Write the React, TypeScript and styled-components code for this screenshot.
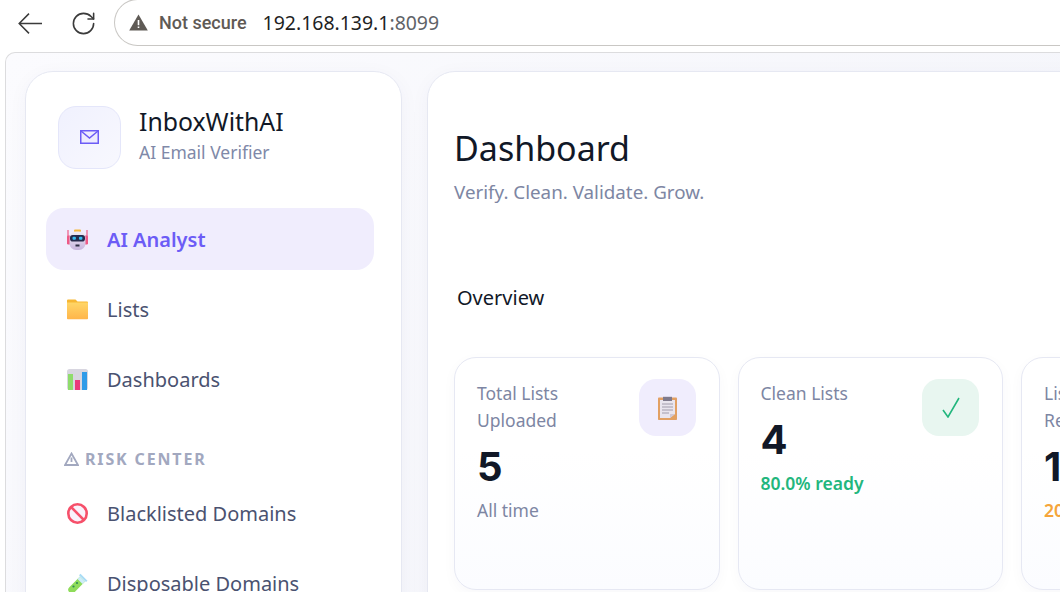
import React from 'react';
import styled, { createGlobalStyle } from 'styled-components';
import { RotateCw } from 'lucide-react';

const GlobalStyle = createGlobalStyle`
  html, body {
    margin: 0;
    padding: 0;
    width: 1060px;
    height: 592px;
    overflow: hidden;
    background: #ffffff;
    font-family: "Noto Sans", "Open Sans", sans-serif;
  }
  * { box-sizing: border-box; }
`;

const Screen = styled.div`
  width: 1060px;
  height: 592px;
  display: flex;
  flex-direction: column;
  overflow: hidden;
`;

const Toolbar = styled.div`
  height: 52px;
  flex: none;
  display: flex;
  align-items: flex-start;
  padding-left: 18px;
  background: #ffffff;
`;

const ToolButton = styled.div<{ $width: number }>`
  width: ${p => p.$width}px;
  height: 46px;
  flex: none;
  display: flex;
  align-items: center;
  color: #3b3b3b;
`;

const AddressBar = styled.div`
  flex: none;
  width: 960px;
  height: 47px;
  margin-top: -1px;
  display: flex;
  align-items: center;
  padding-left: 14px;
  border: 1px solid #c9c7c4;
  border-right: none;
  border-radius: 24px 0 0 24px;
`;

const NotSecure = styled.span`
  margin-left: 11px;
  font-family: "Roboto", sans-serif;
  font-size: 18px;
  font-weight: 500;
  color: #5f5a55;
`;

const Url = styled.span`
  margin-left: 16px;
  font-family: "Noto Sans", sans-serif;
  font-size: 19.45px;
  color: #1f1f1f;
`;

const UrlPort = styled.span`
  color: #5f6368;
`;

const Viewport = styled.div`
  flex: 1;
  min-height: 0;
  margin-left: 5px;
  padding: 18px 0 0 19px;
  display: flex;
  gap: 25px;
  overflow: hidden;
  background: linear-gradient(135deg, #fbfbfe 0%, #f3f4fa 100%);
  border: 1px solid #dcdcde;
  border-right: none;
  border-bottom: none;
  border-radius: 10px 0 0 0;
`;

const Sidebar = styled.aside`
  flex: none;
  width: 377px;
  height: 640px;
  padding: 33px 27px 0 20px;
  background: #ffffff;
  border: 1px solid #e6e8f2;
  border-radius: 28px;
  box-shadow: 0 4px 20px rgba(30, 40, 90, 0.04);
`;

const Brand = styled.div`
  display: flex;
  align-items: center;
  gap: 18px;
  padding-left: 12px;
`;

const BrandMark = styled.div`
  width: 63px;
  height: 63px;
  flex: none;
  display: flex;
  align-items: center;
  justify-content: center;
  background: linear-gradient(135deg, #f0f1fe 0%, #f8f8fe 100%);
  border: 1px solid #e4e6fa;
  border-radius: 18px;
`;

const BrandText = styled.div`
  display: flex;
  flex-direction: column;
  padding-bottom: 2px;
`;

const BrandName = styled.div`
  font-size: 24.8px;
  line-height: 32px;
  color: #111827;
`;

const BrandTag = styled.div`
  font-size: 17.5px;
  line-height: 30px;
  color: #8089a8;
`;

const Nav = styled.nav`
  margin-top: 39px;
  display: flex;
  flex-direction: column;
`;

const NavItem = styled.div<{ $active?: boolean; $gap?: number }>`
  height: 62px;
  margin-bottom: ${p => p.$gap ?? 8}px;
  display: flex;
  align-items: center;
  gap: 19px;
  padding-left: 21px;
  border-radius: 18px;
  font-size: 20px;
  font-weight: ${p => (p.$active ? 600 : 400)};
  color: ${p => (p.$active ? '#6c5cf6' : '#4a5270')};
  background: ${p => (p.$active ? '#f0edfd' : 'transparent')};
`;

const NavIcon = styled.svg`
  width: 21px;
  height: 21px;
  flex: none;
`;

const SectionLabel = styled.div`
  display: flex;
  align-items: center;
  gap: 6px;
  height: 20px;
  margin: 31px 0 13px 18px;
  font-size: 16px;
  font-weight: 700;
  letter-spacing: 1.85px;
  color: #a2a8bf;
`;

const Main = styled.main`
  flex: none;
  width: 760px;
  height: 640px;
  padding: 52px 26px 0;
  background: #ffffff;
  border: 1px solid #e6e8f2;
  border-radius: 28px 0 0 28px;
  box-shadow: 0 4px 20px rgba(30, 40, 90, 0.04);
`;

const Title = styled.h1`
  margin: 0;
  font-size: 34px;
  line-height: 48px;
  font-weight: 400;
  color: #111827;
`;

const Subtitle = styled.p`
  margin: 7px 0 0;
  font-size: 18.8px;
  line-height: 26px;
  color: #7d86a3;
`;

const SectionTitle = styled.h2`
  margin: 79px 0 0 3px;
  font-size: 20px;
  line-height: 28px;
  font-weight: 400;
  color: #111827;
`;

const Cards = styled.div`
  margin-top: 45px;
  display: flex;
  gap: 18px;
`;

const Card = styled.div`
  position: relative;
  flex: none;
  width: 265.5px;
  height: 233px;
  padding: 22px 22px;
  background: linear-gradient(180deg, #ffffff 0%, #ffffff 40%, #fbfcff 100%);
  border: 1px solid #e6e8f3;
  border-radius: 22px;
  box-shadow: 0 4px 14px rgba(30, 40, 90, 0.03);
`;

const CardLabel = styled.div`
  max-width: 135px;
  font-size: 17.5px;
  line-height: 27px;
  color: #7d86a3;
`;

const CardValue = styled.div`
  margin-top: 7px;
  font-family: Inter, "Liberation Sans", sans-serif;
  font-size: 40px;
  line-height: 52px;
  font-weight: 700;
  color: #111827;
`;

const CardNote = styled.div<{ $color?: string; $strong?: boolean }>`
  margin-top: 4px;
  font-size: 17.5px;
  line-height: 26px;
  font-weight: ${p => (p.$strong ? 600 : 400)};
  color: ${p => p.$color ?? '#7d86a3'};
`;

const CardBadge = styled.div<{ $bg: string; $color?: string }>`
  position: absolute;
  top: 21px;
  right: 23px;
  width: 57px;
  height: 57px;
  display: flex;
  align-items: center;
  justify-content: center;
  border-radius: 17px;
  background: ${p => p.$bg};
  color: ${p => p.$color ?? 'inherit'};
`;

const BackArrow = () => (
  <svg width="24" height="21" viewBox="0 0 24 21">
    <path d="M24 10.5H1.2M11 0.6L1.2 10.5L11 20.4" fill="none" stroke="currentColor" strokeWidth="1.5" />
  </svg>
);

const MailGlyph = () => (
  <svg width="19" height="14" viewBox="0 0 19 14">
    <rect x="0.75" y="0.75" width="17.5" height="12.5" fill="#eeecfe" stroke="#6c5cf6" strokeWidth="1.5" />
    <path d="M1 1l8.5 7L18 1" fill="none" stroke="#6c5cf6" strokeWidth="1.5" />
  </svg>
);

const RobotIcon = () => (
  <NavIcon viewBox="0 0 21 21">
    <defs>
      <linearGradient id="robotHead" x1="0" y1="0" x2="0" y2="1">
        <stop offset="0" stopColor="#f1edf5" />
        <stop offset="1" stopColor="#c7b4de" />
      </linearGradient>
    </defs>
    <rect x="7" y="0.5" width="7" height="2.5" rx="1" fill="#f5b93f" />
    <path d="M1 1v12M20 1v12" stroke="#ee5a86" strokeWidth="1.2" />
    <rect x="0" y="6.5" width="3.5" height="9" rx="1.2" fill="#ee5a86" />
    <rect x="17.5" y="6.5" width="3.5" height="9" rx="1.2" fill="#ee5a86" />
    <rect x="2.5" y="2.5" width="16" height="18.5" rx="6.5" fill="url(#robotHead)" />
    <rect x="3" y="6" width="15" height="6.5" rx="2.8" fill="#262b4d" />
    <rect x="5.5" y="7.8" width="3.4" height="3" rx="1" fill="#36bdf0" />
    <rect x="12" y="7.8" width="3.4" height="3" rx="1" fill="#36bdf0" />
    <rect x="8.5" y="15.5" width="4" height="2" fill="#2f2f45" />
  </NavIcon>
);

const FolderIcon = () => (
  <NavIcon viewBox="0 0 21 21">
    <defs>
      <linearGradient id="folderFill" x1="0" y1="0" x2="0" y2="1">
        <stop offset="0" stopColor="#ffd667" />
        <stop offset="1" stopColor="#ffb54a" />
      </linearGradient>
    </defs>
    <path d="M0 1.5a1 1 0 0 1 1-1h7.5l2 2H20a1 1 0 0 1 1 1V8H0z" fill="#f7b733" />
    <path d="M0 3.5h21v16a.8.8 0 0 1-.8.8H.8a.8.8 0 0 1-.8-.8z" fill="url(#folderFill)" />
  </NavIcon>
);

const ChartIcon = () => (
  <NavIcon viewBox="0 0 21 21">
    <rect x="0" y="0" width="21" height="21" rx="2.5" fill="#d8d6e0" />
    <rect x="1" y="5" width="5" height="16" fill="#8fdc6c" />
    <rect x="8" y="11" width="5" height="10" fill="#ea3a7a" />
    <rect x="15" y="3" width="5" height="18" fill="#2f9be8" />
  </NavIcon>
);

const BanIcon = () => (
  <NavIcon viewBox="0 0 21 21">
    <circle cx="10.5" cy="10.5" r="9.2" fill="#f9f2fb" stroke="#f6506a" strokeWidth="2.6" />
    <path d="M4.2 4.2l12.6 12.6" stroke="#f6506a" strokeWidth="2.6" />
  </NavIcon>
);

const TubeIcon = () => (
  <NavIcon viewBox="0 0 21 21">
    <path d="M13 3.5L18 8.5L7.5 19.3a3.6 3.6 0 0 1-5.2-5z" fill="#8fdc5a" />
    <path d="M13 3.5L18 8.5L15.5 11L10.5 6z" fill="#cfecfa" />
    <path d="M13.5 0.8L20.5 7.8L19 9L12 2.2z" fill="#a9dcf5" />
    <circle cx="10" cy="10" r="1.1" fill="#2f8a57" />
    <circle cx="6.5" cy="13.5" r="1.1" fill="#2f8a57" />
  </NavIcon>
);

const ClipboardIcon = () => (
  <svg width="19" height="24" viewBox="0 0 19 24">
    <rect x="0" y="1.5" width="19" height="22.5" rx="0.8" fill="#e2a063" />
    <path d="M2 4h15v14l-5 4H2z" fill="#e9e5ee" />
    <path d="M12 22l5-4h-5z" fill="#d0c8d6" />
    <path d="M5 0.8h9v4.2H5z" fill="#7f7a8c" />
    <path d="M4 8h11M4 11h11M4 14h11M4 17h7" stroke="#a19cab" strokeWidth="1" />
  </svg>
);

const CheckGlyph = () => (
  <svg width="20" height="21" viewBox="0 0 20 21">
    <path d="M2 13l5 7L18 1" fill="none" stroke="currentColor" strokeWidth="1.6" />
  </svg>
);

const WarnFilled = () => (
  <svg width="19" height="17" viewBox="0 0 19 17">
    <path d="M9.5 0.5L18.8 16.5H0.2z" fill="#5f5a55" />
    <path d="M8.7 6h1.6v5.2H8.7zM8.7 12.4h1.6V14H8.7z" fill="#ffffff" />
  </svg>
);

const WarnOutline = () => (
  <svg width="15" height="14" viewBox="0 0 15 14">
    <path d="M7.5 1.5L14 13H1z" fill="none" stroke="#a2a8bf" strokeWidth="1.8" />
    <path d="M7.5 5.5v4.5" stroke="#a2a8bf" strokeWidth="1.8" />
  </svg>
);

const App: React.FC = () => {
  return (
    <Screen>
      <GlobalStyle />
      <Toolbar>
        <ToolButton $width={52}>
          <BackArrow />
        </ToolButton>
        <ToolButton $width={44}>
          <RotateCw size={27} strokeWidth={1.4} />
        </ToolButton>
        <AddressBar>
          <WarnFilled />
          <NotSecure>Not secure</NotSecure>
          <Url>
            192.168.139.1<UrlPort>:8099</UrlPort>
          </Url>
        </AddressBar>
      </Toolbar>
      <Viewport>
        <Sidebar>
          <Brand>
            <BrandMark>
              <MailGlyph />
            </BrandMark>
            <BrandText>
              <BrandName>InboxWithAI</BrandName>
              <BrandTag>AI Email Verifier</BrandTag>
            </BrandText>
          </Brand>
          <Nav>
            <NavItem $active>
              <RobotIcon />
              AI Analyst
            </NavItem>
            <NavItem>
              <FolderIcon />
              Lists
            </NavItem>
            <NavItem>
              <ChartIcon />
              Dashboards
            </NavItem>
            <SectionLabel>
              <WarnOutline />
              RISK CENTER
            </SectionLabel>
            <NavItem>
              <BanIcon />
              Blacklisted Domains
            </NavItem>
            <NavItem>
              <TubeIcon />
              Disposable Domains
            </NavItem>
          </Nav>
        </Sidebar>
        <Main>
          <Title>Dashboard</Title>
          <Subtitle>Verify. Clean. Validate. Grow.</Subtitle>
          <SectionTitle>Overview</SectionTitle>
          <Cards>
            <Card>
              <CardLabel>Total Lists Uploaded</CardLabel>
              <CardValue>5</CardValue>
              <CardNote>All time</CardNote>
              <CardBadge $bg="#f0edfd">
                <ClipboardIcon />
              </CardBadge>
            </Card>
            <Card>
              <CardLabel>Clean Lists</CardLabel>
              <CardValue>4</CardValue>
              <CardNote $strong $color="#22b67d">80.0% ready</CardNote>
              <CardBadge $bg="#e8f6f0" $color="#22b67d">
                <CheckGlyph />
              </CardBadge>
            </Card>
            <Card>
              <CardLabel>Lists Needing Review</CardLabel>
              <CardValue>1</CardValue>
              <CardNote $strong $color="#f5a53a">20.0% flagged</CardNote>
            </Card>
          </Cards>
        </Main>
      </Viewport>
    </Screen>
  );
};

export default App;
